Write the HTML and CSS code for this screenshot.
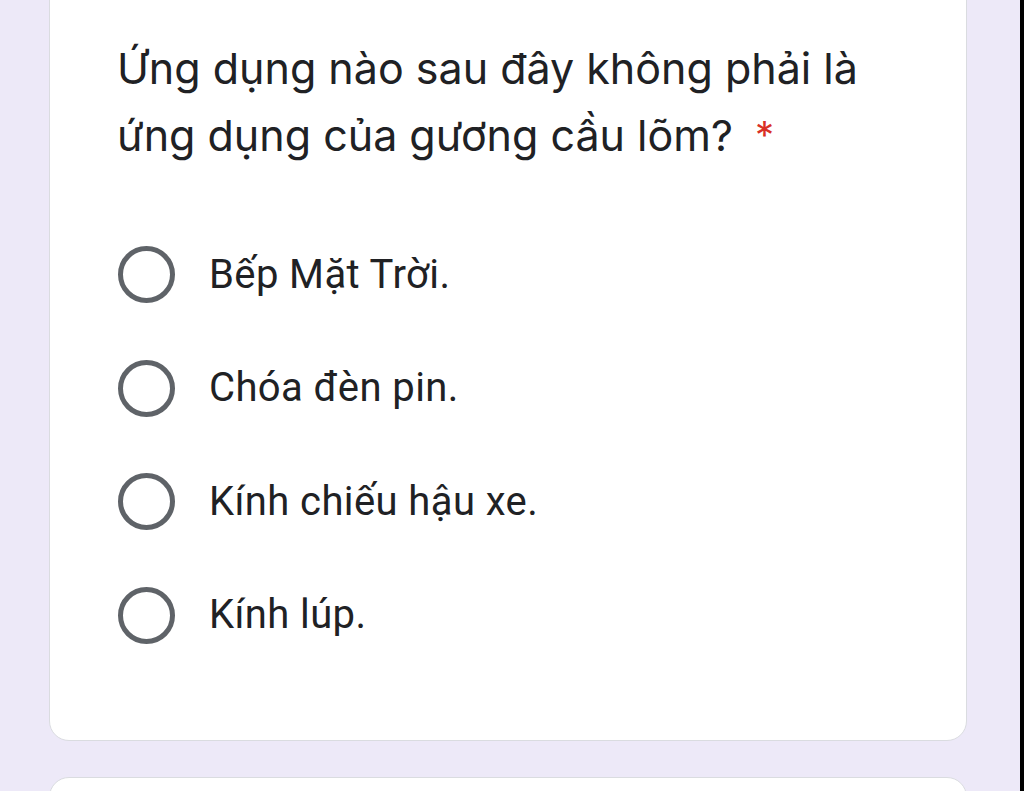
FILE: index.html
```html
<!DOCTYPE html>
<html lang="vi">
<head>
<meta charset="utf-8">
<title>Câu hỏi</title>
<link rel="stylesheet" href="styles.css">
</head>
<body>
<div class="screen">
  <main class="page">
    <section class="card question-card">
      <h2 class="question">Ứng dụng nào sau đây không phải là ứng dụng của gương cầu lõm?<span class="req">*</span></h2>
      <div class="options">
        <label class="option"><span class="radio"></span><span class="opt-text">Bếp Mặt Trời.</span></label>
        <label class="option"><span class="radio"></span><span class="opt-text">Chóa đèn pin.</span></label>
        <label class="option"><span class="radio"></span><span class="opt-text">Kính chiếu hậu xe.</span></label>
        <label class="option"><span class="radio"></span><span class="opt-text">Kính lúp.</span></label>
      </div>
    </section>
    <section class="card next-card"></section>
  </main>
  <div class="edge"></div>
</div>
</body>
</html>
```
FILE: styles.css
```css
html, body {
  margin: 0;
  padding: 0;
  height: 100%;
  overflow: hidden;
}
body {
  background: #ede9f8;
}
.screen {
  display: flex;
  height: 791px;
}
.page {
  flex: 1;
  padding-left: 49px;
  padding-right: 53px;
  display: flex;
  flex-direction: column;
  gap: 36px;
}
.edge {
  width: 4px;
  background: #000;
}
.card {
  background: #fff;
  border: 1px solid #dadce0;
  border-radius: 20px;
  box-sizing: border-box;
}
.question-card {
  margin-top: -30px;
  padding: 64px 40px 68px 67px;
}
.question {
  margin: 0;
  font-family: Inter, "Noto Sans", sans-serif;
  font-weight: 400;
  font-size: 43px;
  line-height: 67px;
  color: #202124;
  width: 790px;
}
.req {
  color: #d93025;
  font-size: 38px;
  margin-left: 22px;
  vertical-align: 2px;
}
.options {
  margin-top: 49px;
  display: flex;
  flex-direction: column;
}
.option {
  height: 113.5px;
  display: flex;
  align-items: center;
  gap: 34px;
  padding-left: 1px;
}
.radio {
  width: 57px;
  height: 57px;
  box-sizing: border-box;
  border: 5px solid #5f6368;
  border-radius: 50%;
  flex: none;
}
.opt-text {
  font-family: Roboto, "Liberation Sans", sans-serif;
  font-size: 40px;
  letter-spacing: 0.4px;
  line-height: 48px;
  color: #202124;
}
.next-card {
  height: 60px;
  flex: none;
}
```
